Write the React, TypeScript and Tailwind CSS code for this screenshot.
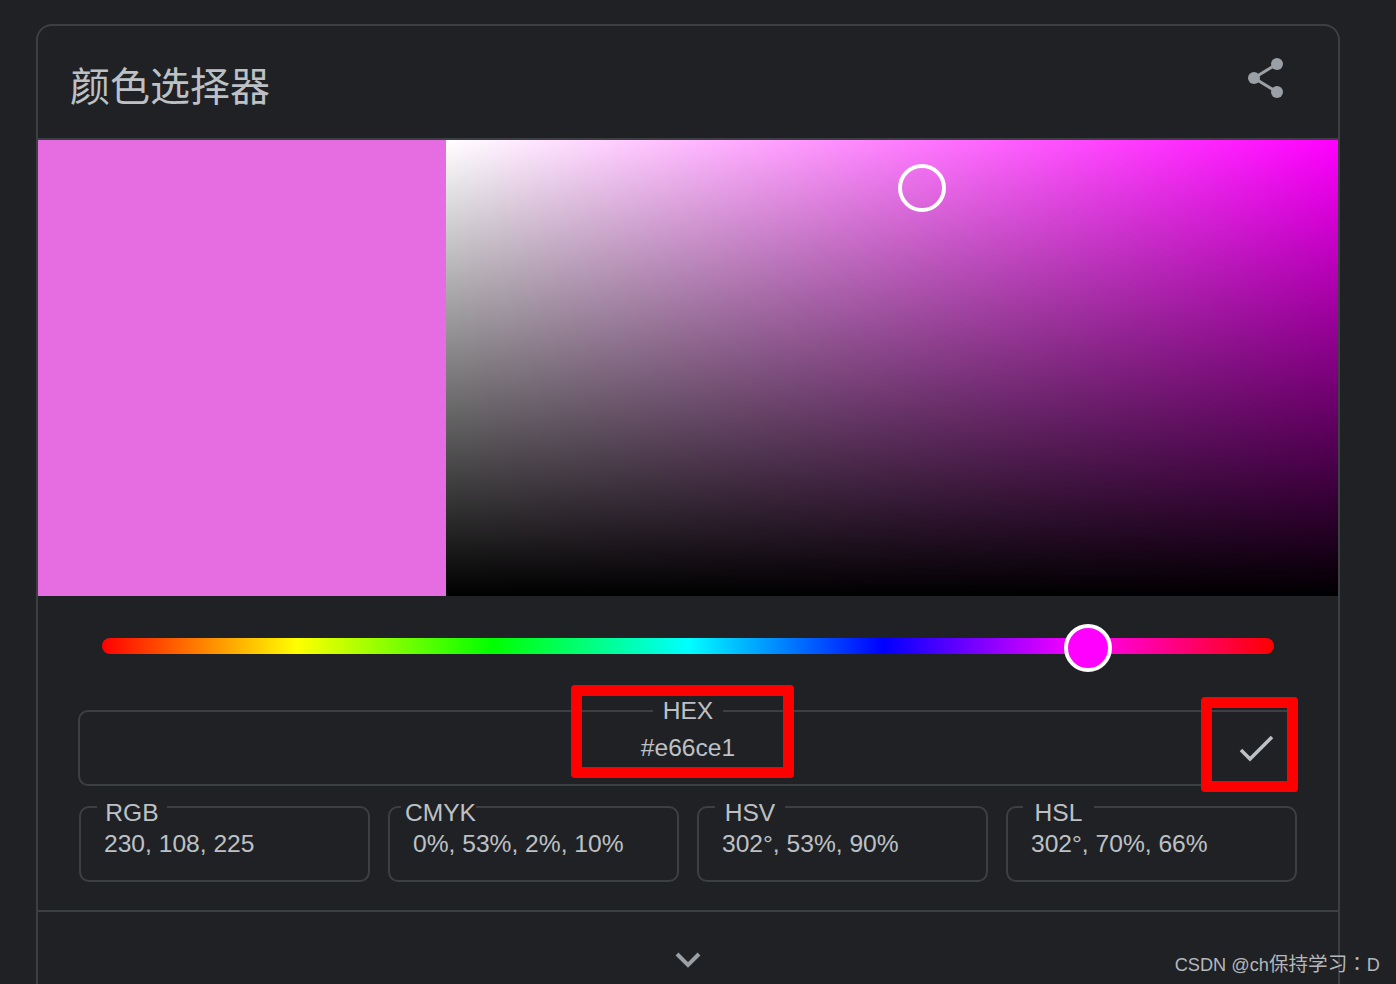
const subFields = [
  { label: "RGB", value: "230, 108, 225", legendClass: "ml-[16px] w-[70px] justify-center" },
  { label: "CMYK", value: "0%, 53%, 2%, 10%", legendClass: "ml-[11px] w-[75px] justify-end" },
  { label: "HSV", value: "302°, 53%, 90%", legendClass: "ml-[16px] w-[70px] justify-center" },
  { label: "HSL", value: "302°, 70%, 66%", legendClass: "ml-[15px] w-[71px] justify-center" },
];

function ShareIcon() {
  return (
    <svg width="40" height="44" viewBox="0 0 40 44" fill="#9aa0a6" stroke="#9aa0a6">
      <path d="M31 7 8 21l23 14" fill="none" strokeWidth="3" />
      <circle cx="31" cy="7" r="6" stroke="none" />
      <circle cx="8" cy="21" r="6" stroke="none" />
      <circle cx="31" cy="35" r="6" stroke="none" />
    </svg>
  );
}

export default function App() {
  return (
    <div className="relative h-[984px] overflow-hidden bg-[#202124] pl-[36px] pt-[24px] font-['Liberation_Sans','Noto_Sans_CJK_SC',sans-serif] text-[24.6px] text-[#bdc1c6]">
      <div className="w-[1304px] rounded-t-[16px] border-x-2 border-t-2 border-[#3c4043]">
        <div className="flex h-[114px] items-center justify-between border-b-2 border-[#3c4043] pl-[32px] pr-[52px]">
          <h1 className="pt-[10px] text-[40px] leading-[48px] font-normal">颜色选择器</h1>
          <div className="mb-[6px]">
            <ShareIcon />
          </div>
        </div>

        <div className="flex h-[456px]">
          <div className="w-[408px] bg-[#e66ce1]" />
          <div className="relative flex-1 bg-[linear-gradient(to_top,#000,transparent),linear-gradient(to_right,#fff,#f0f)]">
            <div className="absolute left-[452px] top-[24px] h-[48px] w-[48px] rounded-full border-4 border-white" />
          </div>
        </div>

        <div className="relative mx-[64px] mt-[42px] h-[16px] rounded-full bg-[linear-gradient(to_right,#f00,#ff0,#0f0,#0ff,#00f,#f0f,#f00)]">
          <div className="absolute left-[962px] top-[-14px] h-[48px] w-[48px] rounded-full border-4 border-white bg-[#f0f]" />
        </div>

        <div className="relative ml-[40px] mt-[43px] w-[1220px]">
          <fieldset className="h-[89px] rounded-[10px] border-2 border-[#3c4043]">
            <legend className="mx-auto w-[70px] text-center leading-[28px]">HEX</legend>
            <div className="mt-[8px] grid grid-cols-[1fr_auto_1fr] items-center px-[22px] leading-[30px]">
              <span className="col-start-2">#e66ce1</span>
              <svg className="justify-self-end" width="36" height="28" viewBox="0 0 36 28" fill="none" stroke="#bdc1c6" strokeWidth="3.5">
                <path d="m3 16 9 9L34 3" />
              </svg>
            </div>
          </fieldset>
          <div className="absolute left-[493px] top-[-12px] h-[93px] w-[223px] rounded-[4px] border-[11px] border-[#ff0000]" />
          <div className="absolute left-[1123px] top-[0px] h-[95px] w-[97px] rounded-[4px] border-[11px] border-[#ff0000]" />
        </div>

        <div className="ml-[41px] mt-[3px] grid w-[1218px] grid-cols-4 gap-[18px]">
          {subFields.map((f) => (
            <fieldset key={f.label} className="h-[93px] rounded-[10px] border-2 border-[#3c4043]">
              <legend className={`${f.legendClass} flex pt-[12px] leading-[24px] whitespace-nowrap`}>{f.label}</legend>
              <div className="mt-[4px] pl-[23px] leading-[30px]">{f.value}</div>
            </fieldset>
          ))}
        </div>

        <div className="mt-[28px] flex h-[80px] justify-center border-t-2 border-[#3c4043] pt-[39px]">
          <svg width="26" height="18" viewBox="0 0 26 18" fill="none" stroke="#9aa0a6" strokeWidth="4">
            <path d="m2 3 11 11L24 3" />
          </svg>
        </div>
      </div>

      <div className="absolute right-[16px] top-[950px] text-[18.2px] leading-[26px] text-[#b4b8bc]">
        CSDN @ch<span className="font-['Noto_Sans_CJK_TC',sans-serif] text-[19.6px]">保持学习：</span>D
      </div>
    </div>
  );
}
